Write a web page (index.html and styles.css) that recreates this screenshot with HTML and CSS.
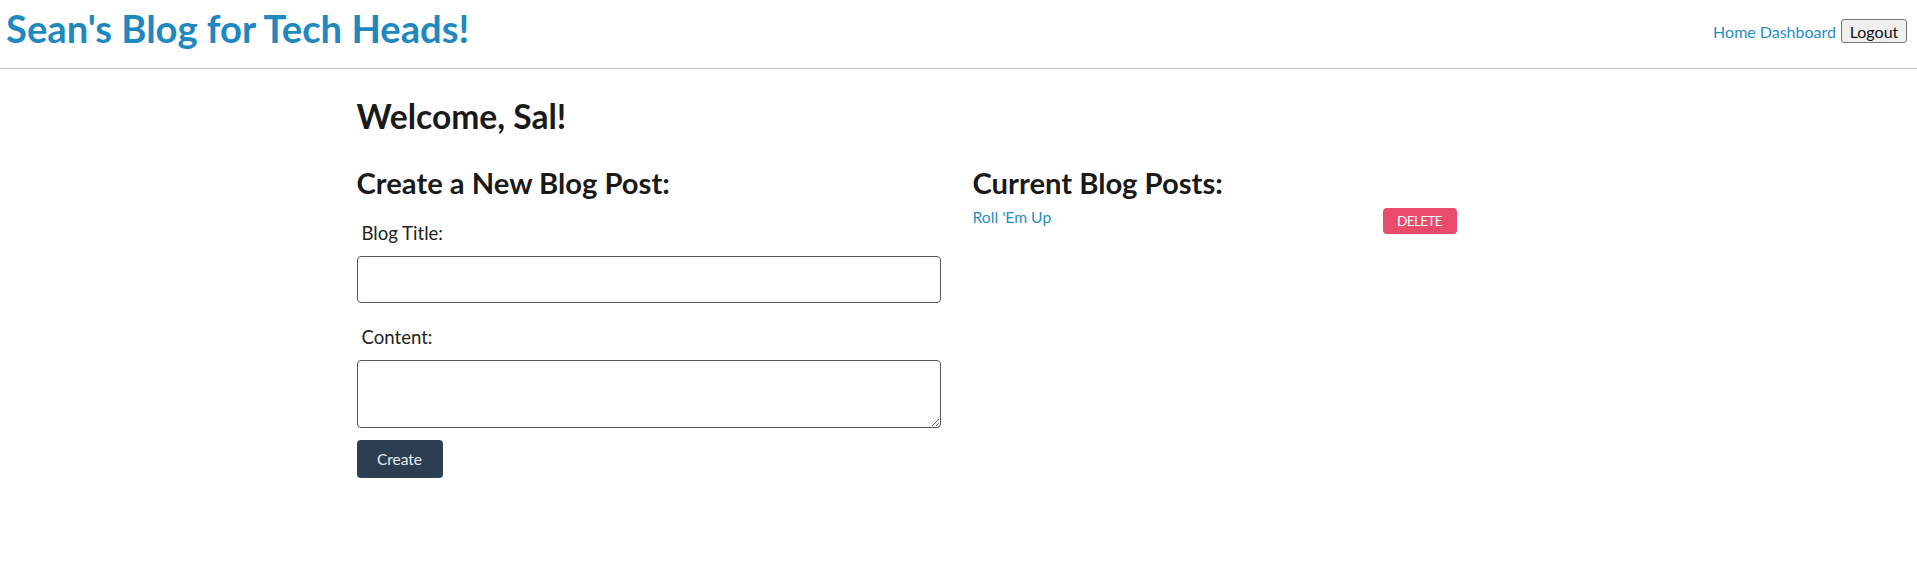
FILE: index.html
```html
<!DOCTYPE html>
<html lang="en">
<head>
<meta charset="utf-8">
<title>Sean's Blog for Tech Heads!</title>
<link rel="stylesheet" href="styles.css">
</head>
<body>
<header class="site-header">
  <h1 class="site-title">Sean's Blog for Tech Heads!</h1>
  <nav class="site-nav">
    <a href="#" class="nav-link">Home</a> <a href="#" class="nav-link">Dashboard</a>
    <button class="logout-btn" type="button">Logout</button>
  </nav>
</header>
<main class="container">
  <h2 class="welcome">Welcome, Sal!</h2>
  <div class="columns">
    <section class="create-col">
      <h3 class="section-title">Create a New Blog Post:</h3>
      <form class="post-form">
        <label class="field-label" for="title">Blog Title:</label>
        <input class="field-input" id="title" type="text">
        <label class="field-label field-label-second" for="content">Content:</label>
        <textarea class="field-textarea" id="content"></textarea>
        <button class="create-btn" type="button">Create</button>
      </form>
    </section>
    <section class="posts-col">
      <h3 class="section-title">Current Blog Posts:</h3>
      <div class="post-row">
        <a href="#" class="post-link">Roll 'Em Up</a>
        <button class="delete-btn" type="button">DELETE</button>
      </div>
    </section>
  </div>
</main>
</body>
</html>
```
FILE: styles.css
```css
html, body {
  margin: 0;
  padding: 0;
  background: #ffffff;
}

body {
  font-family: "Lato", "Noto Sans", sans-serif;
  color: #1c1c1c;
}

.site-header {
  display: flex;
  justify-content: space-between;
  align-items: flex-start;
  height: 68px;
  border-bottom: 1px solid #c8c8c8;
  padding: 0 10px 0 6px;
}

.site-title {
  margin: 0;
  padding-top: 8px;
  font-size: 38.2px;
  line-height: 40px;
  font-weight: 700;
  color: #1e88bf;
}

.site-nav {
  display: flex;
  align-items: center;
  height: 24px;
  margin-top: 19px;
  font-size: 16px;
}

.nav-link {
  color: #2a8cc3;
  text-decoration: none;
  margin-left: 4px;
}

.logout-btn {
  margin-left: 5px;
  height: 24px;
  width: 66px;
  padding: 0;
  font-family: "Lato", "Noto Sans", sans-serif;
  font-size: 16px;
  color: #111;
  background: #efefef;
  border: 1px solid #767676;
  border-radius: 3px;
}

.container {
  width: 1204px;
  margin: 0 auto;
  padding-top: 27px;
}

.welcome {
  margin: 0;
  font-size: 33.6px;
  line-height: 40px;
  font-weight: 700;
  color: #1a1a1a;
}

.columns {
  display: grid;
  grid-template-columns: 584px 1fr;
  column-gap: 32px;
  margin-top: 29px;
}

.section-title {
  margin: 0;
  font-size: 29.2px;
  line-height: 36px;
  font-weight: 700;
  color: #1a1a1a;
}

.post-form {
  display: flex;
  flex-direction: column;
  align-items: flex-start;
}

.field-label {
  display: block;
  margin-top: 21px;
  margin-bottom: 12px;
  padding-left: 5px;
  font-size: 18.6px;
  line-height: 22px;
  color: #222;
}

.field-label-second {
  margin-top: 23px;
}

.field-input,
.field-textarea {
  box-sizing: border-box;
  width: 584px;
  margin: 0;
  border: 1px solid #5a5a5a;
  border-radius: 4px;
  background: #fff;
  font-family: "Lato", "Noto Sans", sans-serif;
  font-size: 16px;
}

.field-input {
  height: 47px;
}

.field-textarea {
  height: 68px;
  resize: both;
}

.create-btn {
  margin-top: 12px;
  height: 38px;
  width: 86px;
  padding: 0;
  font-family: "Lato", "Noto Sans", sans-serif;
  font-size: 15.5px;
  color: #e6eef5;
  background: #2c3e50;
  border: none;
  border-radius: 4px;
}

.post-row {
  display: flex;
  justify-content: space-between;
  align-items: flex-start;
  width: 484px;
  padding-top: 7px;
}

.post-link {
  font-size: 15.7px;
  line-height: 19px;
  color: #2a8cc3;
  text-decoration: none;
}

.delete-btn {
  height: 26px;
  width: 74px;
  padding: 0;
  font-family: "Lato", "Noto Sans", sans-serif;
  font-size: 13.5px;
  letter-spacing: -0.6px;
  color: #ffffff;
  background: #e84c6a;
  border: none;
  border-radius: 4px;
}
```
